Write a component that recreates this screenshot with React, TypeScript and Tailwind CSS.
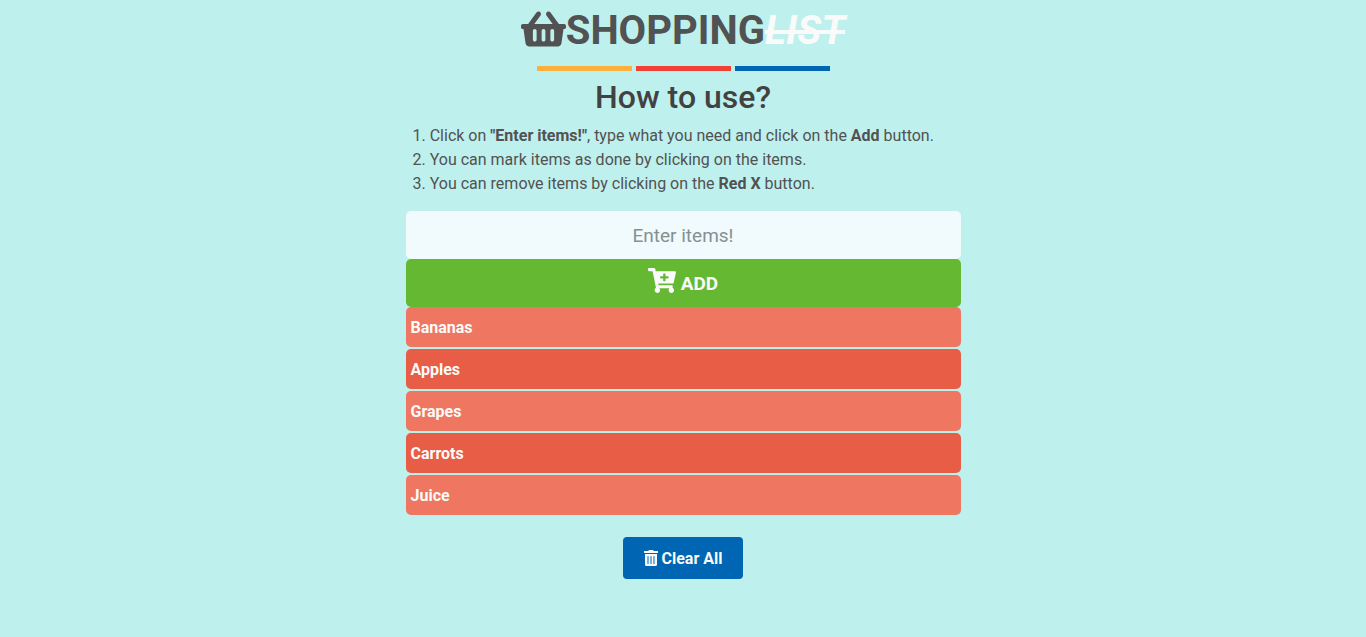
import { useState } from "react";
import type { FormEvent } from "react";
import { FaCartPlus, FaShoppingBasket, FaTrashAlt } from "react-icons/fa";

type Item = { id: number; name: string; done: boolean };

const initialItems: Item[] = ["Bananas", "Apples", "Grapes", "Carrots", "Juice"].map((name, id) => ({
  id,
  name,
  done: false,
}));

function Header() {
  return (
    <header className="flex flex-col items-center">
      <h1 className="text-[40px] leading-[62px] font-bold whitespace-nowrap text-[#525252]">
        <FaShoppingBasket aria-hidden="true" className="inline-block h-10 w-[45px] align-[-0.125em]" />
        SHOPPING<em className="text-[#fafafa] line-through">LIST</em>
      </h1>
      <div className="mt-1 flex gap-1">
        <span className="h-[5px] w-[95px] bg-[#fbb040]" />
        <span className="h-[5px] w-[95px] bg-[#ef4136]" />
        <span className="h-[5px] w-[95px] bg-[#0066b3]" />
      </div>
    </header>
  );
}

function Instructions() {
  return (
    <section>
      <h2 className="mt-[7px] mb-2 text-center text-[32px] leading-[38px] font-medium text-[#424242]">How to use?</h2>
      <ol className="mb-[15px] list-inside list-decimal pl-[7px] text-base text-[#525252]">
        <li>
          Click on <b>"Enter items!"</b>, type what you need and click on the <b>Add</b> button.
        </li>
        <li>You can mark items as done by clicking on the items.</li>
        <li>
          You can remove items by clicking on the <b>Red X</b> button.
        </li>
      </ol>
    </section>
  );
}

export default function App() {
  const [items, setItems] = useState<Item[]>(initialItems);
  const [text, setText] = useState("");

  function addItem(event: FormEvent) {
    event.preventDefault();
    const name = text.trim();
    if (!name) return;
    setItems([...items, { id: Date.now(), name, done: false }]);
    setText("");
  }

  function toggleItem(id: number) {
    setItems(items.map((item) => (item.id === id ? { ...item, done: !item.done } : item)));
  }

  return (
    <div className="min-h-screen bg-[#bef0ed] font-['Roboto',sans-serif]">
      <main className="mx-auto w-full max-w-[555px] pb-8">
        <Header />
        <Instructions />
        <form onSubmit={addItem}>
          <input
            type="text"
            aria-label="Enter items"
            placeholder="Enter items!"
            value={text}
            onChange={(event) => setText(event.target.value)}
            className="block h-12 w-full rounded-[5px] bg-[#f1fafc] px-2 text-center text-[19px] text-[#525252] placeholder:text-[#849192]"
          />
          <button
            type="submit"
            className="block h-12 w-full rounded-[5px] bg-[#65b932] text-[19px] font-bold text-[#fafafa]"
          >
            <FaCartPlus aria-hidden="true" className="inline-block h-[25px] w-7 align-[-3px]" /> ADD
          </button>
        </form>
        <ul className="flex flex-col gap-0.5">
          {items.map((item) => (
            <li key={item.id} className="rounded-[5px] bg-[#e85d45] odd:bg-[#ef7761]">
              <button
                type="button"
                aria-pressed={item.done}
                onClick={() => toggleItem(item.id)}
                className="block h-10 w-full px-[5px] pt-0.5 text-left text-base font-bold text-[#fafafa] aria-pressed:line-through"
              >
                {item.name}
              </button>
            </li>
          ))}
        </ul>
        <button
          type="button"
          onClick={() => setItems([])}
          className="mx-auto mt-[22px] block h-[42px] rounded-[4px] bg-[#0066b3] px-[21px] pt-0.5 text-base font-bold text-[#fafafa]"
        >
          <FaTrashAlt aria-hidden="true" className="inline-block h-4 w-3.5 align-[-0.125em]" /> Clear All
        </button>
      </main>
    </div>
  );
}
